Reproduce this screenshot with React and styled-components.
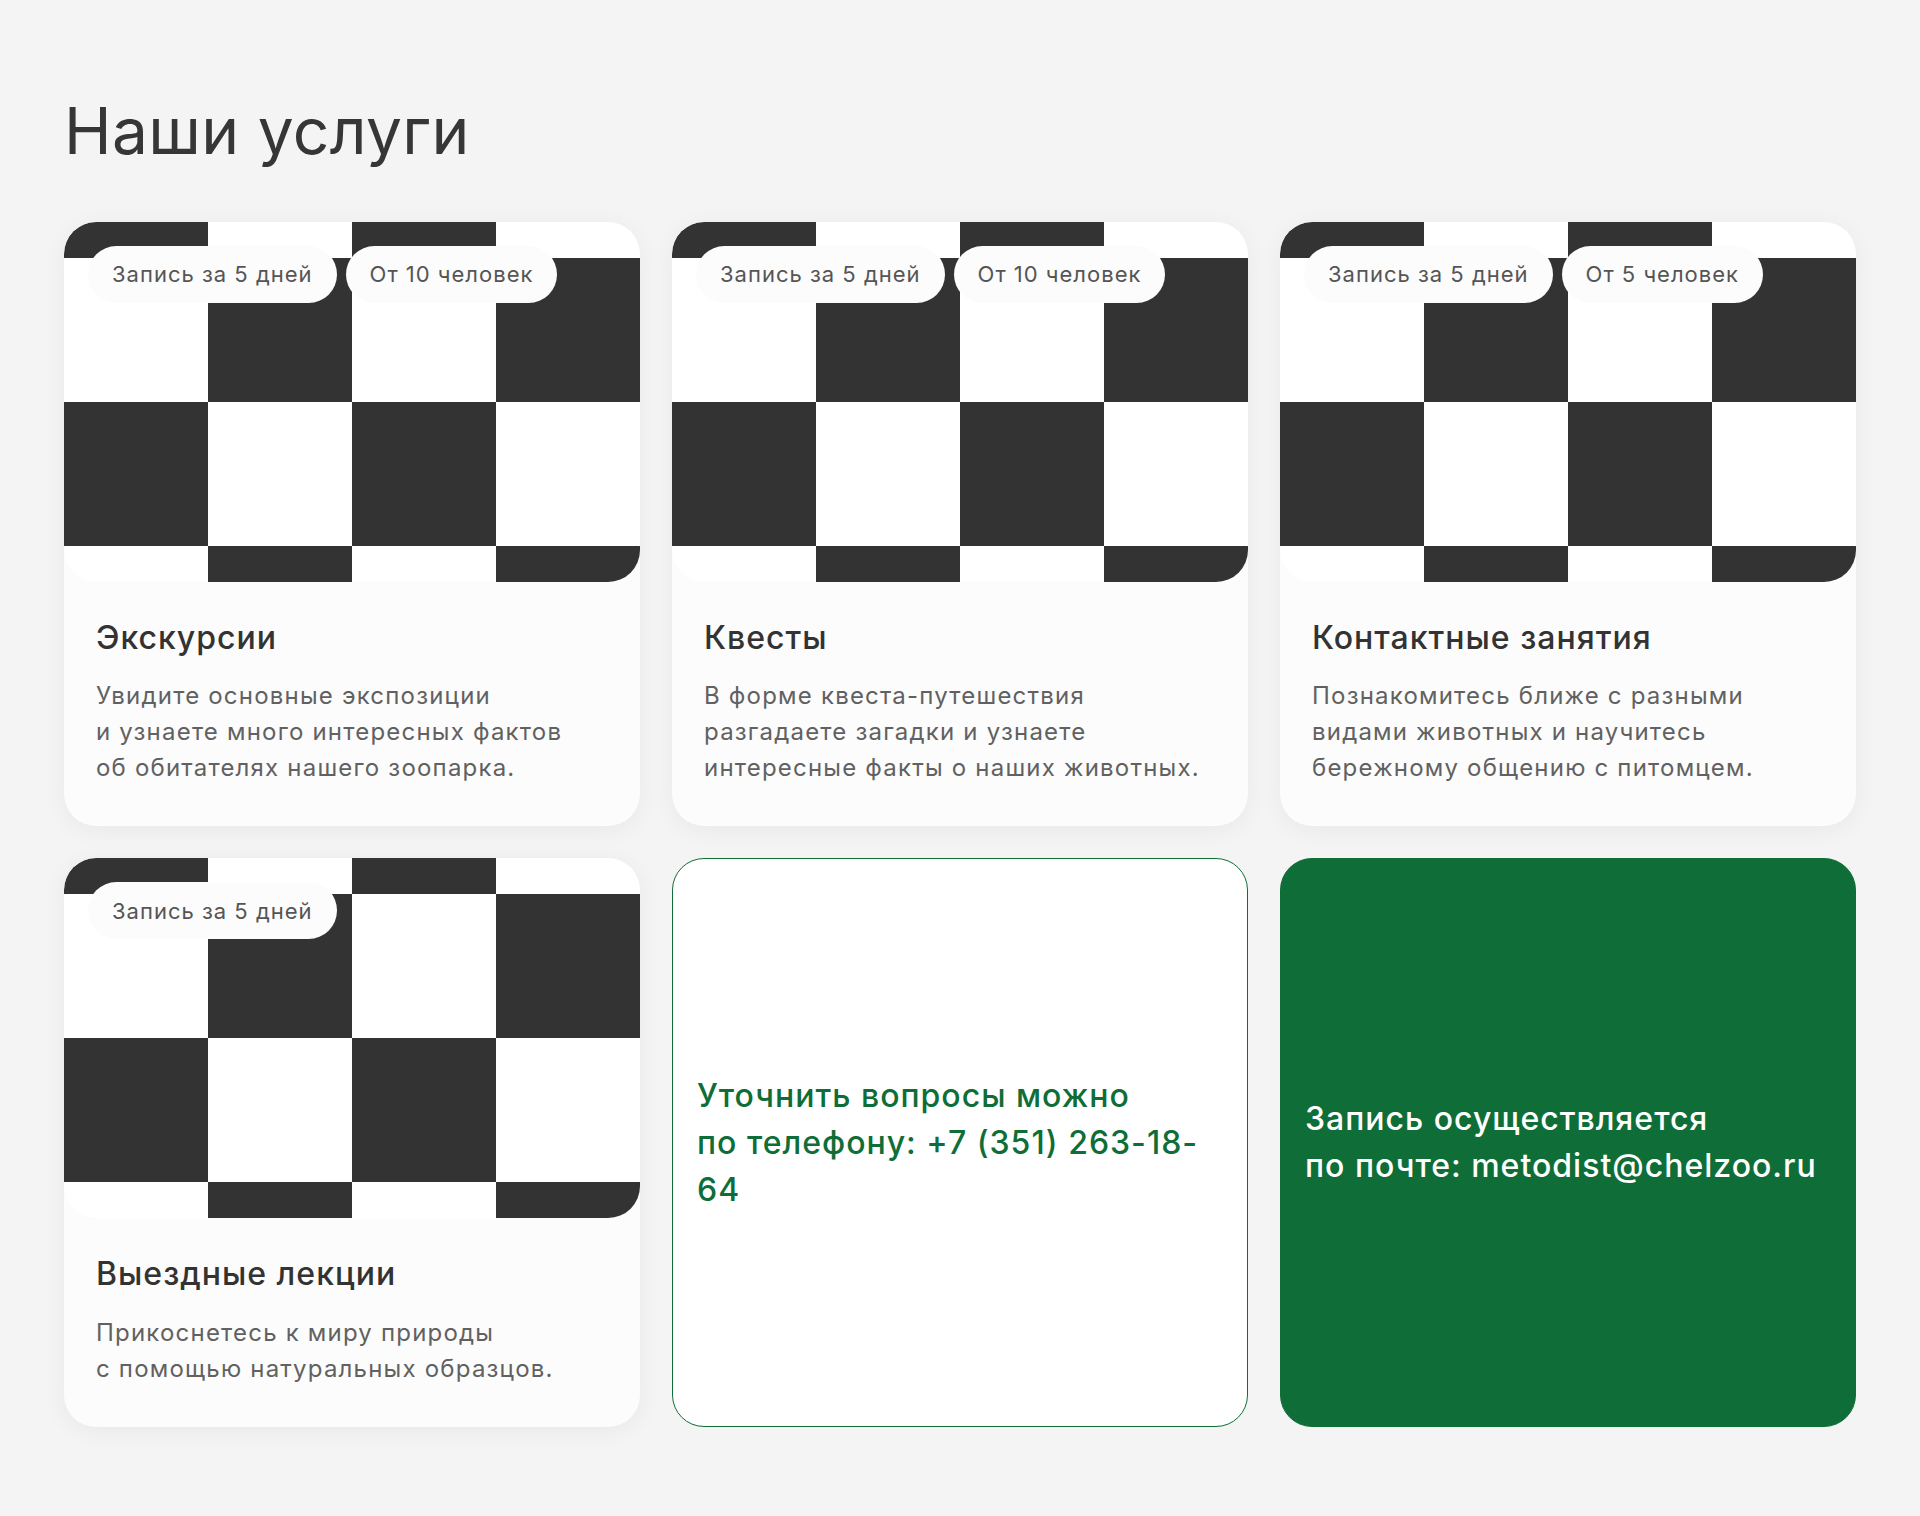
import React from "react";
import styled, { createGlobalStyle } from "styled-components";

const GlobalStyle = createGlobalStyle`
  html, body {
    margin: 0;
    padding: 0;
    background: #f4f4f4;
  }
  body {
    font-family: Inter, "Noto Sans", "Liberation Sans", sans-serif;
    -webkit-font-smoothing: antialiased;
  }
  * { box-sizing: border-box; }
`;

const Section = styled.section`
  padding: 93px 64px 89px;
  min-height: 1516px;
`;

const Heading = styled.h2`
  margin: 0 0 52px;
  font-size: 64px;
  line-height: 1.2;
  font-weight: 400;
  color: #363636;
  letter-spacing: 0.35px;
`;

const Grid = styled.div`
  display: grid;
  grid-template-columns: repeat(3, 1fr);
  gap: 32px;
`;

const Card = styled.article`
  background: #fcfcfc;
  border-radius: 32px;
  overflow: hidden;
  box-shadow: 0 4px 24px rgba(0, 0, 0, 0.05);
  display: flex;
  flex-direction: column;
`;

const Picture = styled.div`
  position: relative;
  height: 360px;
  border-radius: 32px;
  background-color: #ffffff;
  background-image: repeating-conic-gradient(#333333 0 25%, #ffffff 0 50%);
  background-size: 288px 288px;
  background-position: 144px -108px;
`;

const Tags = styled.div`
  position: absolute;
  top: 24px;
  left: 24px;
  display: flex;
  gap: 9px;
`;

const Tag = styled.span`
  display: inline-flex;
  align-items: center;
  height: 57px;
  padding: 0 24px;
  border-radius: 999px;
  background: #fcfcfc;
  color: #555555;
  font-size: 22px;
  font-weight: 400;
  letter-spacing: 1px;
  white-space: nowrap;
`;

const Body = styled.div`
  padding: 37px 32px 40px;
`;

const Title = styled.h3`
  margin: 0 0 21px;
  font-size: 32px;
  line-height: 1.2;
  font-weight: 500;
  color: #333333;
  letter-spacing: 1px;
`;

const Text = styled.p`
  margin: 0;
  font-size: 24px;
  line-height: 36px;
  color: #616161;
  letter-spacing: 1.2px;
`;

const InfoCard = styled.div`
  display: flex;
  align-items: center;
  padding: 24px;
  border-radius: 32px;
  border: 1px solid #0f6e37;
  background: ${(p) => (p.$filled ? "#0f6e37" : "#ffffff")};
  color: ${(p) => (p.$filled ? "#ffffff" : "#0f6e37")};
`;

const InfoText = styled.p`
  margin: 0;
  font-size: 32px;
  line-height: 47px;
  font-weight: 500;
  letter-spacing: 1px;
`;

const services = [
  {
    tags: ["Запись за 5 дней", "От 10 человек"],
    title: "Экскурсии",
    lines: [
      "Увидите основные экспозиции",
      "и узнаете много интересных фактов",
      "об обитателях нашего зоопарка.",
    ],
  },
  {
    tags: ["Запись за 5 дней", "От 10 человек"],
    title: "Квесты",
    lines: [
      "В форме квеста-путешествия",
      "разгадаете загадки и узнаете",
      "интересные факты о наших животных.",
    ],
  },
  {
    tags: ["Запись за 5 дней", "От 5 человек"],
    title: "Контактные занятия",
    lines: [
      "Познакомитесь ближе с разными",
      "видами животных и научитесь",
      "бережному общению с питомцем.",
    ],
  },
  {
    tags: ["Запись за 5 дней"],
    title: "Выездные лекции",
    lines: ["Прикоснетесь к миру природы", "с помощью натуральных образцов."],
  },
];

function ServiceCard({ tags, title, lines }) {
  return (
    <Card>
      <Picture>
        <Tags>
          {tags.map((t) => (
            <Tag key={t}>{t}</Tag>
          ))}
        </Tags>
      </Picture>
      <Body>
        <Title>{title}</Title>
        <Text>
          {lines.map((l, i) => (
            <React.Fragment key={i}>
              {l}
              {i < lines.length - 1 && <br />}
            </React.Fragment>
          ))}
        </Text>
      </Body>
    </Card>
  );
}

export default function App() {
  return (
    <>
      <GlobalStyle />
      <Section>
        <Heading>Наши услуги</Heading>
        <Grid>
          {services.map((s) => (
            <ServiceCard key={s.title} {...s} />
          ))}
          <InfoCard>
            <InfoText>
              Уточнить вопросы можно
              <br />
              по телефону: +7 (351) 263-18-
              <br />
              64
            </InfoText>
          </InfoCard>
          <InfoCard $filled>
            <InfoText>
              Запись осуществляется
              <br />
              по почте: metodist@chelzoo.ru
            </InfoText>
          </InfoCard>
        </Grid>
      </Section>
    </>
  );
}
